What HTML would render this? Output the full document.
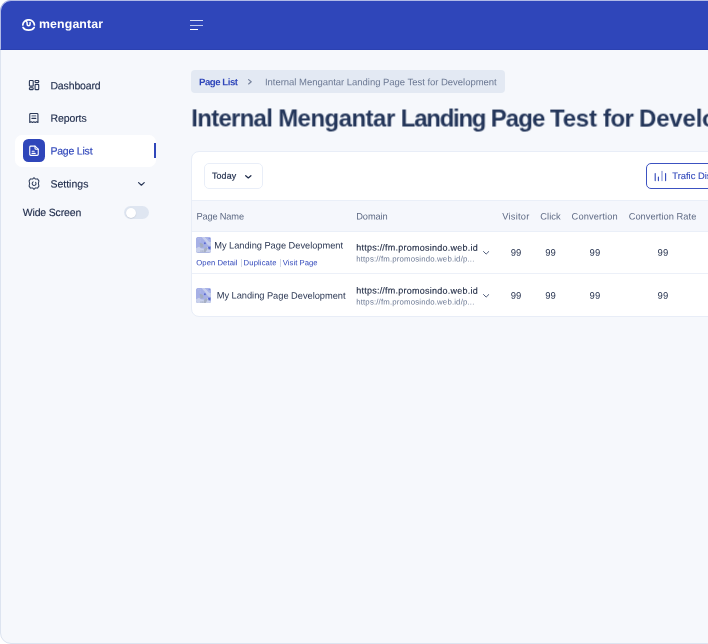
<!DOCTYPE html>
<html lang="en">
<head>
<meta charset="utf-8">
<title>Mengantar - Page List</title>
<style>
*{box-sizing:border-box;margin:0;padding:0}
html,body{width:708px;height:644px;overflow:hidden;background:#fff;font-family:"Liberation Sans",sans-serif;color:#1f2c4b}
body{position:relative}
.frame{position:absolute;left:0;top:0;width:740px;height:644px;border:1px solid #dde4f0;border-radius:11px;background:#f6f8fc;overflow:hidden}
.hdr{position:absolute;left:0;top:0;width:742px;height:50px;background:#2f46ba;border-top:1px solid #b1bae7;border-left:1px solid #b1bae7;border-bottom:1px solid #2b41b1;border-top-left-radius:11px}
.a,.t{position:absolute;white-space:nowrap}
.t{left:0;top:0;font-family:"Liberation Sans",sans-serif;transform-origin:0 0}
.card{position:absolute;left:191px;top:151px;width:560px;height:166px;background:#fff;border:1px solid #e8edf7;border-radius:8px;overflow:hidden}
.thead{position:absolute;left:-1px;top:48px;width:562px;height:32px;background:#f5f7fc;border-top:1px solid #eaeff8;border-bottom:1px solid #eaeff8}
.thumb{position:absolute;width:15px;height:15.3px;border-radius:2.5px;overflow:hidden;background:#a7b1df}
</style>
</head>
<body>
<div class="frame"></div><div class="hdr"></div>

<!-- logo mark -->
<svg class="a" style="left:21px;top:18.6px" width="15" height="14" viewBox="0 0 15 14" fill="none" stroke="#fff" stroke-width="1.7" stroke-linecap="round">
  <path d="M1.8 6 A5.8 5.2 0 0 1 13.4 6"/>
  <path d="M2 8.4 A6 4.4 0 0 0 13.2 8.4"/>
  <path d="M5.2 2.4 Q6.1 2.6 6.1 3.6 V5.2 A1.5 1.5 0 0 0 9.1 5.2 V3.4" stroke-width="1.5"/>
</svg>
<!-- hamburger -->
<div class="a" style="left:190px;top:20px;width:13px;height:1px;background:#d6dcf5"></div>
<div class="a" style="left:190px;top:24.5px;width:13px;height:1.2px;background:#bfc8ee"></div>
<div class="a" style="left:190px;top:29px;width:8px;height:1.2px;background:#fff"></div>

<!-- sidebar active item -->
<div class="a" style="left:15px;top:134.8px;width:141.4px;height:32.1px;background:#fff;border-radius:7px"></div>
<div class="a" style="left:22.7px;top:139.4px;width:22.5px;height:22.8px;border-radius:5.5px;background:#2f46ba"></div>
<div class="a" style="left:154.3px;top:143.4px;width:2.1px;height:14.6px;background:#2f46ba"></div>

<!-- dashboard icon -->
<svg class="a" style="left:28px;top:79px" width="12" height="12" viewBox="0 0 12 12" fill="none" stroke="#2a3857" stroke-width="1.1" stroke-linejoin="round">
  <rect x="1.4" y="1.5" width="3.8" height="5.6" rx="0.7"/>
  <rect x="1.4" y="8.8" width="3.8" height="1.8" rx="0.6"/>
  <rect x="7.1" y="1.5" width="3.6" height="2" rx="0.6"/>
  <rect x="7.1" y="5.4" width="3.6" height="5.2" rx="0.7"/>
</svg>
<!-- reports icon -->
<svg class="a" style="left:28px;top:112px" width="12" height="12" viewBox="0 0 12 12" fill="none" stroke="#2a3857" stroke-width="1.1" stroke-linejoin="round" stroke-linecap="round">
  <path d="M1.75 10.45 V2.4 A0.9 0.9 0 0 1 2.65 1.55 H9.05 A0.9 0.9 0 0 1 9.95 2.4 V10.45 L8.6 9.7 L7.2 10.45 L5.85 9.7 L4.5 10.45 L3.1 9.7 Z"/>
  <path d="M3.9 6.4 H7.8"/><path d="M3.9 3.9 H7.8" stroke="#6c7890"/>
</svg>
<!-- page list icon -->
<svg class="a" style="left:28px;top:145px" width="12" height="12" viewBox="0 0 12 12" fill="none" stroke="#fff" stroke-width="1.1" stroke-linejoin="round" stroke-linecap="round">
  <path d="M1.75 2.1 A1 1 0 0 1 2.75 1.15 H7 L10.25 4.2 V9.4 A1 1 0 0 1 9.25 10.35 H2.75 A1 1 0 0 1 1.75 9.4 Z"/>
  <path d="M7 1.15 V3.2 A1 1 0 0 0 8 4.2 H10.25"/>
  <path d="M4.2 6.2 H6.2 M4 8.4 H7.2"/>
</svg>
<!-- settings icon -->
<svg class="a" style="left:28px;top:177px" width="12" height="13" viewBox="0 0 12 13" fill="none" stroke="#34425f" stroke-width="1.05" stroke-linejoin="round" stroke-linecap="round">
  <path d="M6 0.7 L7.4 2.1 L9.5 1.9 L10.9 3.9 L10.4 6.5 L10.9 9.1 L9.5 11.1 L7.4 10.9 L6 12.3 L4.6 10.9 L2.5 11.1 L1.1 9.1 L1.6 6.5 L1.1 3.9 L2.5 1.9 L4.6 2.1 Z"/>
  <path d="M5.2 4.9 A1.9 1.9 0 1 0 7.6 5.4"/>
</svg>
<svg class="a" style="left:137.7px;top:181.8px" width="7" height="4" viewBox="0 0 7 4" fill="none" stroke="#2a3857" stroke-width="1.2" stroke-linecap="round" stroke-linejoin="round"><path d="M0.6 0.6 L3.4 3.2 L6.2 0.6"/></svg>
<!-- toggle -->
<div class="a" style="left:124px;top:206.2px;width:25px;height:13px;border-radius:7px;background:#dfe6f1"><div class="a" style="left:1.7px;top:1.4px;width:10.2px;height:10.2px;border-radius:50%;background:#fff;box-shadow:0 0.5px 1px rgba(120,130,150,.35)"></div></div>

<!-- breadcrumb pill -->
<div class="a" style="left:191px;top:70.3px;width:314px;height:22.7px;border-radius:4px;background:#e3e9f3"></div>
<svg class="a" style="left:248px;top:79.3px" width="4" height="6" viewBox="0 0 4 6" fill="none" stroke="#76829c" stroke-width="1.15" stroke-linecap="round" stroke-linejoin="round"><path d="M0.6 0.6 L3.2 2.8 L0.6 5"/></svg>

<!-- card -->
<div class="card">
  <div class="a" style="left:12px;top:11px;width:59px;height:26px;border:1px solid #e9eef8;border-radius:5px;background:#fff"></div>
  <div class="a" style="left:454px;top:11px;width:130px;height:26px;border:1px solid #3c52c1;border-radius:5px;background:#fff"></div>
  <div class="thead"></div>
  <div class="a" style="left:-1px;top:120.5px;width:562px;height:1px;background:#ecf0f8"></div>
  <div class="thumb" style="left:3.8px;top:85.3px"><svg width="15" height="15.3" viewBox="0 0 15 15" preserveAspectRatio="none"><rect width="15" height="15" fill="#a6b0e6"/><path d="M5.5 0 L9 0 L13 4.5 L15 5 V9 L12 8 L9.5 4.5 Z" fill="#c6ceec"/><path d="M9 0 H15 V5 L13 4.5 Z" fill="#aab4e8"/><path d="M0 11 L3 9.5 L5 11 L9 11.5 L11 9.5 L13 11.5 L15 13 V15 H0 Z" fill="#c9d1ec"/><path d="M3.5 6 L5 5.8 L7.3 7.2 V10 L4.6 10.2 Z" fill="#a3adc2"/><path d="M8 11.5 L10.5 9.8 L11.8 11 L9.5 15 H7.5 Z" fill="#a7b0c4"/><path d="M4.5 13 H5.5 V15 H4.5Z M6.3 13 H7.2 V15 H6.3Z" fill="#a9b2c6"/><circle cx="8.9" cy="6.2" r="1" fill="#5a6bd2"/><path d="M12 9.5 L14.5 9.5 L14.3 12 L12.6 12.2 Z" fill="#5566cf"/><circle cx="13.2" cy="1.6" r="0.7" fill="#7784da"/><circle cx="2.2" cy="1.8" r="0.5" fill="#bcc4e6"/><circle cx="4.1" cy="1.8" r="0.5" fill="#bcc4e6"/><circle cx="4.1" cy="3.8" r="0.5" fill="#bcc4e6"/></svg></div>
  <div class="thumb" style="left:3.8px;top:135.7px"><svg width="15" height="15.3" viewBox="0 0 15 15" preserveAspectRatio="none"><rect width="15" height="15" fill="#a6b0e6"/><path d="M5.5 0 L9 0 L13 4.5 L15 5 V9 L12 8 L9.5 4.5 Z" fill="#c6ceec"/><path d="M9 0 H15 V5 L13 4.5 Z" fill="#aab4e8"/><path d="M0 11 L3 9.5 L5 11 L9 11.5 L11 9.5 L13 11.5 L15 13 V15 H0 Z" fill="#c9d1ec"/><path d="M3.5 6 L5 5.8 L7.3 7.2 V10 L4.6 10.2 Z" fill="#a3adc2"/><path d="M8 11.5 L10.5 9.8 L11.8 11 L9.5 15 H7.5 Z" fill="#a7b0c4"/><path d="M4.5 13 H5.5 V15 H4.5Z M6.3 13 H7.2 V15 H6.3Z" fill="#a9b2c6"/><circle cx="8.9" cy="6.2" r="1" fill="#5a6bd2"/><path d="M12 9.5 L14.5 9.5 L14.3 12 L12.6 12.2 Z" fill="#5566cf"/><circle cx="13.2" cy="1.6" r="0.7" fill="#7784da"/><circle cx="2.2" cy="1.8" r="0.5" fill="#bcc4e6"/><circle cx="4.1" cy="1.8" r="0.5" fill="#bcc4e6"/><circle cx="4.1" cy="3.8" r="0.5" fill="#bcc4e6"/></svg></div>
</div>
<!-- toolbar icons -->
<svg class="a" style="left:245px;top:174.6px" width="7" height="4" viewBox="0 0 7 4" fill="none" stroke="#1f2c4b" stroke-width="1.25" stroke-linecap="round" stroke-linejoin="round"><path d="M0.7 0.7 L3.3 2.9 L5.9 0.7"/></svg>
<svg class="a" style="left:654px;top:170px" width="13" height="12" viewBox="0 0 13 12" fill="none" stroke="#2f46ba" stroke-width="1.1" stroke-linecap="round"><path d="M1.2 3.6 V10.6 M4.4 7 V10.6 M11.6 3.6 V10.6"/><path d="M8 1.4 V10.6" stroke="#7d8cd6"/></svg>
<!-- link separators -->
<div class="a" style="left:240.5px;top:258.5px;width:1px;height:8px;background:#cfd6e6"></div>
<div class="a" style="left:280px;top:258.5px;width:1px;height:8px;background:#cfd6e6"></div>
<!-- row chevrons -->
<svg class="a" style="left:482.9px;top:251px" width="7" height="5" viewBox="0 0 7 5" fill="none" stroke="#4f5c7a" stroke-width="1" stroke-linecap="round" stroke-linejoin="round"><path d="M0.5 0.5 L3.15 3.1 L5.8 0.5"/></svg>
<svg class="a" style="left:482.9px;top:294px" width="7" height="5" viewBox="0 0 7 5" fill="none" stroke="#4f5c7a" stroke-width="1" stroke-linecap="round" stroke-linejoin="round"><path d="M0.5 0.5 L3.15 3.1 L5.8 0.5"/></svg>

<div id="txt" style="position:absolute;left:0;top:0;width:708px;height:644px;will-change:transform">
<div class="t" style="transform:translate(39.00px,15.90px) rotate(0.03deg);font-size:12.3px;line-height:16px;color:#fff;font-weight:bold;letter-spacing:0.147px;">mengantar</div>
<div class="t" style="transform:translate(50.40px,78.20px) rotate(0.03deg);font-size:10.5px;line-height:14px;color:#1f2c4b;letter-spacing:-0.131px;-webkit-text-stroke:0.15px #1f2c4b;">Dashboard</div>
<div class="t" style="transform:translate(50.40px,110.80px) rotate(0.03deg);font-size:10.5px;line-height:14px;color:#1f2c4b;letter-spacing:-0.081px;-webkit-text-stroke:0.15px #1f2c4b;">Reports</div>
<div class="t" style="transform:translate(50.40px,143.40px) rotate(0.03deg);font-size:10.5px;line-height:14px;color:#2f46ba;letter-spacing:-0.198px;-webkit-text-stroke:0.15px #2f46ba;">Page List</div>
<div class="t" style="transform:translate(50.40px,176.40px) rotate(0.03deg);font-size:10.5px;line-height:14px;color:#1f2c4b;letter-spacing:0.006px;-webkit-text-stroke:0.15px #1f2c4b;">Settings</div>
<div class="t" style="transform:translate(22.70px,205.10px) rotate(0.03deg);font-size:10.5px;line-height:14px;color:#1f2c4b;letter-spacing:-0.155px;-webkit-text-stroke:0.15px #1f2c4b;">Wide Screen</div>
<div class="t" style="transform:translate(199.00px,75.20px) rotate(0.03deg);font-size:9.6px;line-height:13px;color:#2f46ba;font-weight:bold;letter-spacing:-0.462px;">Page List</div>
<div class="t" style="transform:translate(265.00px,75.20px) rotate(0.03deg);font-size:9.5px;line-height:13px;color:#6b7893;letter-spacing:-0.030px;">Internal Mengantar Landing Page Test for Development</div>
<div class="t" style="transform:translate(191.30px,103.40px) rotate(0.03deg);font-size:24px;line-height:29px;color:#24365a;font-weight:bold;"><span style="letter-spacing:-0.718px">Internal </span><span style="letter-spacing:-0.532px">Mengantar </span><span style="letter-spacing:-1.273px">Landing </span><span style="letter-spacing:-0.926px">Page </span><span style="letter-spacing:-0.247px">Test </span><span style="letter-spacing:-0.668px">for </span><span style="letter-spacing:-0.200px">Development</span></div>
<div class="t" style="transform:translate(211.90px,169.80px) rotate(0.03deg);font-size:8.9px;line-height:12px;color:#1f2c4b;letter-spacing:0.163px;-webkit-text-stroke:0.2px #1f2c4b;">Today</div>
<div class="t" style="transform:translate(672.30px,169.00px) rotate(0.03deg);font-size:9.4px;line-height:13px;color:#2f46ba;-webkit-text-stroke:0.1px #2f46ba;">Trafic Distribution</div>
<div class="t" style="transform:translate(196.40px,210.40px) rotate(0.03deg);font-size:9.3px;line-height:12px;color:#5f6b85;letter-spacing:-0.179px;">Page Name</div>
<div class="t" style="transform:translate(356.30px,210.40px) rotate(0.03deg);font-size:9.3px;line-height:12px;color:#5f6b85;letter-spacing:-0.141px;">Domain</div>
<div class="t" style="transform:translate(502.35px,210.40px) rotate(0.03deg);font-size:9.3px;line-height:12px;color:#5f6b85;letter-spacing:0.204px;">Visitor</div>
<div class="t" style="transform:translate(540.20px,210.40px) rotate(0.03deg);font-size:9.3px;line-height:12px;color:#5f6b85;letter-spacing:0.089px;">Click</div>
<div class="t" style="transform:translate(571.60px,210.40px) rotate(0.03deg);font-size:9.3px;line-height:12px;color:#5f6b85;letter-spacing:0.123px;">Convertion</div>
<div class="t" style="transform:translate(628.65px,210.40px) rotate(0.03deg);font-size:9.3px;line-height:12px;color:#5f6b85;letter-spacing:0.034px;">Convertion Rate</div>
<div class="t" style="transform:translate(356.20px,241.60px) rotate(0.03deg);font-size:9.0px;line-height:12px;color:#18233d;letter-spacing:0.237px;-webkit-text-stroke:0.12px #18233d;">https://fm.promosindo.web.id</div>
<div class="t" style="transform:translate(356.20px,253.40px) rotate(0.03deg);font-size:7.8px;line-height:11px;color:#6b7893;letter-spacing:0.170px;">https://fm.promosindo.web.id/p...</div>
<div class="t" style="transform:translate(510.70px,245.80px) rotate(0.03deg);font-size:9.5px;line-height:13px;color:#2a3652;letter-spacing:0.111px;">99</div>
<div class="t" style="transform:translate(545.20px,245.80px) rotate(0.03deg);font-size:9.5px;line-height:13px;color:#2a3652;letter-spacing:0.111px;">99</div>
<div class="t" style="transform:translate(589.50px,245.80px) rotate(0.03deg);font-size:9.5px;line-height:13px;color:#2a3652;letter-spacing:0.111px;">99</div>
<div class="t" style="transform:translate(657.50px,245.80px) rotate(0.03deg);font-size:9.5px;line-height:13px;color:#2a3652;letter-spacing:0.111px;">99</div>
<div class="t" style="transform:translate(356.20px,284.60px) rotate(0.03deg);font-size:9.0px;line-height:12px;color:#18233d;letter-spacing:0.237px;-webkit-text-stroke:0.12px #18233d;">https://fm.promosindo.web.id</div>
<div class="t" style="transform:translate(356.20px,296.40px) rotate(0.03deg);font-size:7.8px;line-height:11px;color:#6b7893;letter-spacing:0.170px;">https://fm.promosindo.web.id/p...</div>
<div class="t" style="transform:translate(510.70px,288.80px) rotate(0.03deg);font-size:9.5px;line-height:13px;color:#2a3652;letter-spacing:0.111px;">99</div>
<div class="t" style="transform:translate(545.20px,288.80px) rotate(0.03deg);font-size:9.5px;line-height:13px;color:#2a3652;letter-spacing:0.111px;">99</div>
<div class="t" style="transform:translate(589.50px,288.80px) rotate(0.03deg);font-size:9.5px;line-height:13px;color:#2a3652;letter-spacing:0.111px;">99</div>
<div class="t" style="transform:translate(657.50px,288.80px) rotate(0.03deg);font-size:9.5px;line-height:13px;color:#2a3652;letter-spacing:0.111px;">99</div>
<div class="t" style="transform:translate(214.20px,239.40px) rotate(0.03deg);font-size:9.3px;line-height:12px;color:#2a3652;letter-spacing:-0.035px;">My Landing Page Development</div>
<div class="t" style="transform:translate(216.70px,289.60px) rotate(0.03deg);font-size:9.3px;line-height:12px;color:#2a3652;letter-spacing:-0.035px;">My Landing Page Development</div>
<div class="t" style="transform:translate(196.30px,257.20px) rotate(0.03deg);font-size:7.7px;line-height:11px;color:#2f46ba;letter-spacing:0.054px;">Open Detail</div>
<div class="t" style="transform:translate(243.60px,257.20px) rotate(0.03deg);font-size:7.7px;line-height:11px;color:#2f46ba;letter-spacing:0.104px;">Duplicate</div>
<div class="t" style="transform:translate(282.70px,257.20px) rotate(0.03deg);font-size:7.7px;line-height:11px;color:#2f46ba;letter-spacing:0.052px;">Visit Page</div>
</div>
</body>
</html>
